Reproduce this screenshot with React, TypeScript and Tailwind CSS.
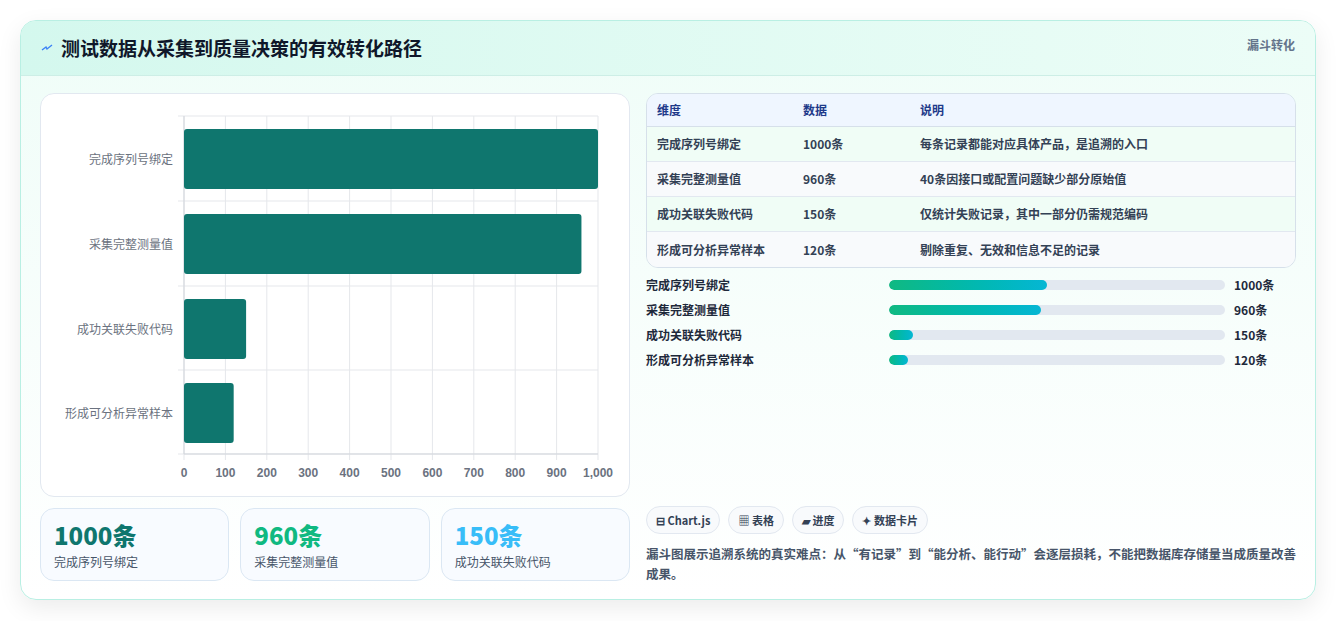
import React from "react";

const rows = [
  { name: "完成序列号绑定", v: 1000, d: "每条记录都能对应具体产品，是追溯的入口", w: 158 },
  { name: "采集完整测量值", v: 960, d: "40条因接口或配置问题缺少部分原始值", w: 152 },
  { name: "成功关联失败代码", v: 150, d: "仅统计失败记录，其中一部分仍需规范编码", w: 24 },
  { name: "形成可分析异常样本", v: 120, d: "剔除重复、无效和信息不足的记录", w: 19 },
];

function Chart() {
  const x0 = 143, sc = 0.414, top = 22, bot = 360;
  const ticks = [0, 100, 200, 300, 400, 500, 600, 700, 800, 900, 1000];
  const rowB = [22, 107, 192, 276, 360];
  return (
    <svg width="589" height="403" className="block">
      {ticks.map((t) => (
        <line key={t} x1={x0 + t * sc} x2={x0 + t * sc} y1={top} y2={bot + 6} stroke="#e5e7eb" strokeWidth="1" />
      ))}
      {rowB.map((y) => (
        <line key={y} x1={x0 - 6} x2={x0 + 1000 * sc} y1={y} y2={y} stroke="#e5e7eb" strokeWidth="1" />
      ))}
      <line x1={x0} x2={x0 + 414} y1={bot} y2={bot} stroke="#d1d5db" />
      <line x1={x0} x2={x0} y1={top} y2={bot} stroke="#d1d5db" />
      {rows.map((r, i) => {
        const y = rowB[i] + 13;
        return (
          <g key={r.name}>
            <rect x={x0} y={y} width={r.v * sc} height={60} rx="3" fill="#0f766e" />
            <text x={132} y={y + 35} textAnchor="end" fontSize="12" fill="#6b7280" fontFamily="'Noto Sans CJK SC', sans-serif">{r.name}</text>
          </g>
        );
      })}
      {ticks.map((t) => (
        <text key={t} x={x0 + t * sc} y={383} textAnchor="middle" fontSize="12" fontWeight="600" fill="#6b7280" fontFamily="'Liberation Sans', sans-serif">
          {t === 1000 ? "1,000" : t}
        </text>
      ))}
    </svg>
  );
}

export default function App() {
  return (
    <div className="w-[1336px] h-[621px] bg-white pt-[20px] pl-[20px]" style={{ fontFamily: "'Noto Sans CJK SC', 'Noto Sans', sans-serif" }}>
      <div className="w-[1296px] h-[580px] rounded-[16px] border border-[#b9efe3] overflow-hidden shadow-[0_8px_24px_rgba(0,0,0,0.08)] bg-gradient-to-b from-[#effdf8] to-[#ffffff]">
        <div className="h-[55px] flex items-center justify-between pl-[20px] pr-[20px] bg-gradient-to-r from-[#d4f8ee] to-[#ecfdf7] border-b border-[#cdeee6]">
          <div className="flex items-center gap-[8px]">
            <svg width="12" height="10" viewBox="0 0 12 10"><path d="M1 7 L5 4 L6 6 L11 2" stroke="#3b82f6" strokeWidth="1.4" fill="none" /></svg>
            <span className="text-[19px] font-bold text-[#0f172a]">测试数据从采集到质量决策的有效转化路径</span>
          </div>
          <span className="text-[12px] font-semibold text-[#64748b] self-start mt-[15px]">漏斗转化</span>
        </div>
        <div className="flex gap-[16px] px-[19px] pt-[17px]">
          <div className="w-[590px] flex flex-col gap-[11px]">
            <div className="h-[404px] rounded-[14px] border border-[#e2e8f0] bg-white">
              <Chart />
            </div>
            <div className="grid grid-cols-3 gap-[11px]">
              {[
                { v: "1000条", c: "text-[#0f766e]", l: "完成序列号绑定" },
                { v: "960条", c: "text-[#10b981]", l: "采集完整测量值" },
                { v: "150条", c: "text-[#38bdf8]", l: "成功关联失败代码" },
              ].map((s) => (
                <div key={s.l} className="h-[73px] rounded-[14px] border border-[#dbe7f3] bg-[#f8fbff] px-[13px] pt-[10px]">
                  <div className={`text-[24px] leading-[32px] font-extrabold ${s.c}`}>{s.v}</div>
                  <div className="text-[12px] text-[#475569] mt-[2px]">{s.l}</div>
                </div>
              ))}
            </div>
          </div>
          <div className="w-[652px] flex flex-col">
            <div className="rounded-[12px] border border-[#d6e0ea] overflow-hidden text-[12px]">
              <div className="h-[33px] flex items-center bg-[#eff6ff] border-b border-[#d6e0ea] font-semibold text-[#1e3a8a]">
                <div className="w-[156px] pl-[10px]">维度</div>
                <div className="w-[117px]">数据</div>
                <div>说明</div>
              </div>
              {rows.map((r, i) => (
                <div key={r.name} className={`h-[35px] flex items-center font-semibold text-[#334155] ${i < 3 ? "border-b border-[#e2e8f0]" : ""} ${i % 2 === 0 ? "bg-[#f0fdf6]" : "bg-[#f8fafc]"}`}>
                  <div className="w-[156px] pl-[10px]">{r.name}</div>
                  <div className="w-[117px]">{r.v}条</div>
                  <div>{r.d}</div>
                </div>
              ))}
            </div>
            <div className="mt-[8px] flex flex-col gap-[7px]">
              {rows.map((r) => (
                <div key={r.name} className="h-[18px] flex items-center text-[12px] font-semibold text-[#1e293b]">
                  <div className="w-[243px]">{r.name}</div>
                  <div className="w-[336px] h-[10px] rounded-full bg-[#e2e8f0] overflow-hidden">
                    <div className="h-full rounded-full bg-gradient-to-r from-[#10b981] to-[#06b6d4]" style={{ width: r.w }} />
                  </div>
                  <div className="ml-[9px] font-bold">{r.v}条</div>
                </div>
              ))}
            </div>
            <div className="mt-[137px] flex gap-[8px]">
              {["⊟ Chart.js", "▦ 表格", "▰ 进度", "✦ 数据卡片"].map((t) => (
                <span key={t} className="h-[28px] px-[9px] flex items-center rounded-full border border-[#e2e8f0] bg-[#f8fafc] text-[11px] font-semibold text-[#334155]">{t}</span>
              ))}
            </div>
            <p className="mt-[10px] text-[12.5px] leading-[20px] font-semibold text-[#475569]">漏斗图展示追溯系统的真实难点：从“有记录”到“能分析、能行动”会逐层损耗，不能把数据库存储量当成质量改善成果。</p>
          </div>
        </div>
      </div>
    </div>
  );
}
